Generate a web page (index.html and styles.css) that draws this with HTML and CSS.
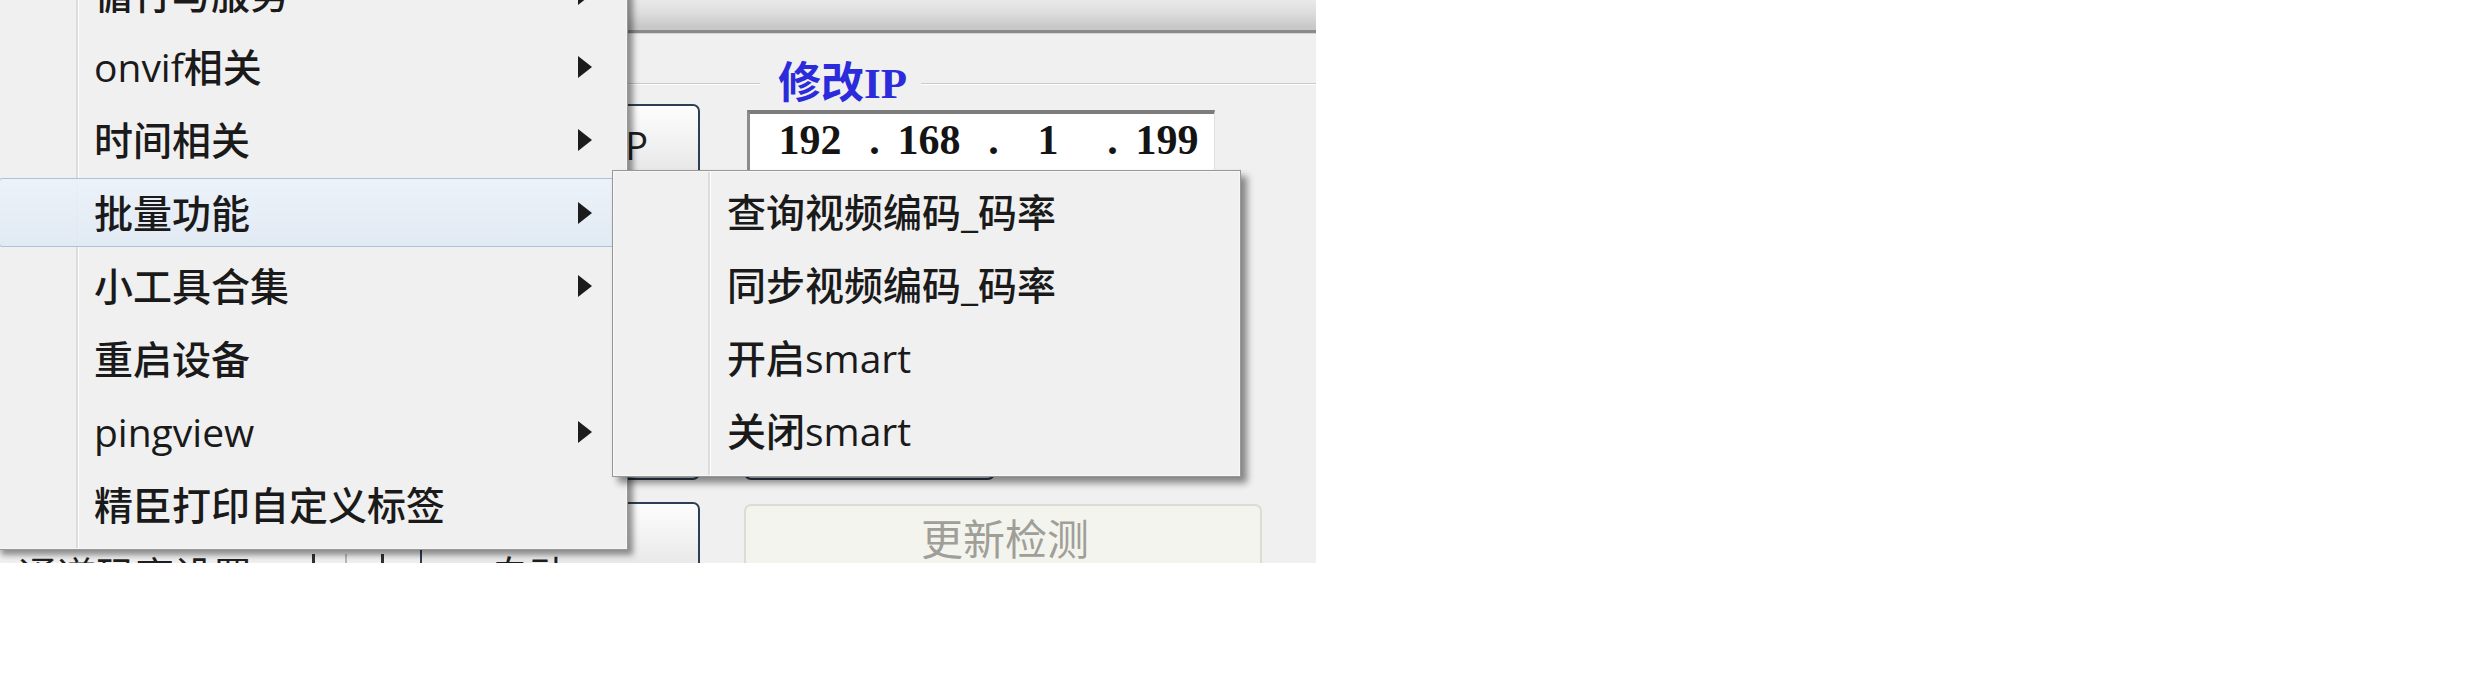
FILE: index.html
```html
<!DOCTYPE html>
<html lang="zh-CN">
<head>
<meta charset="utf-8">
<title>批量功能菜单</title>
<link rel="stylesheet" href="styles.css">
</head>
<body>
<div class="screen">
  <div class="window">
    <div class="titlebar"></div>
    <div class="group-head">
      <span class="gline lead"></span>
      <span class="glabel">修改IP</span>
      <span class="gline rest"></span>
    </div>
    <div class="controls">
      <button class="btn c1 r1"><span class="btn-label">修改IP</span></button>
      <div class="ipbox c2 r1">
        <span class="oct">192</span><span class="dot">.</span><span class="oct">168</span><span class="dot">.</span><span class="oct">1</span><span class="dot">.</span><span class="oct">199</span>
      </div>
      <button class="btn c1 r2">读取参数</button>
      <button class="btn c1 r3">保存参数</button>
      <button class="btn c1 r4">恢复默认</button>
      <button class="btn narrow c2 r4">搜索</button>
      <div class="left-row c0 r5">
        <span class="left-text">通道码率设置</span>
        <span class="spin"></span>
      </div>
      <button class="btn low c1 r5"><span class="low-label">自动</span></button>
      <button class="btn disabled c2 r5">更新检测</button>
    </div>
  </div>

  <div class="menu main-menu">
    <div class="item"><span class="label">循行与服务</span><span class="arrow"></span></div>
    <div class="item"><span class="label">onvif相关</span><span class="arrow"></span></div>
    <div class="item"><span class="label">时间相关</span><span class="arrow"></span></div>
    <div class="item active"><span class="label">批量功能</span><span class="arrow"></span></div>
    <div class="item"><span class="label">小工具合集</span><span class="arrow"></span></div>
    <div class="item"><span class="label">重启设备</span></div>
    <div class="item"><span class="label">pingview</span><span class="arrow"></span></div>
    <div class="item"><span class="label">精臣打印自定义标签</span></div>
  </div>

  <div class="menu sub-menu">
    <div class="item"><span class="label">查询视频编码_码率</span></div>
    <div class="item"><span class="label">同步视频编码_码率</span></div>
    <div class="item"><span class="label">开启smart</span></div>
    <div class="item"><span class="label">关闭smart</span></div>
  </div>
</div>
</body>
</html>
```

FILE: styles.css
```css
* { box-sizing: border-box; }

html, body {
  margin: 0;
  padding: 0;
  background: #ffffff;
}

body {
  font-family: "Open Sans", "Noto Sans CJK SC", sans-serif;
}

.screen {
  position: relative;
  width: 1316px;
  height: 563px;
  overflow: hidden;
  background: #f0f0f0;
}

/* ---------- background window ---------- */
.window {
  width: 1316px;
}

.titlebar {
  height: 33px;
  background: linear-gradient(#e9e9e9, #dedede 40%, #c8c8c8 90%);
  border-bottom: 3px solid #8a8a8a;
  box-shadow: 0 1px 0 #d4d4d4;
}

.group-head {
  display: flex;
  align-items: center;
  height: 40px;
  margin-top: 31px;
}

.gline {
  height: 2px;
  border-top: 1px solid #c9c9c9;
  border-bottom: 1px solid #ffffff;
}

.gline.lead { flex: 0 0 760px; }
.gline.rest { flex: 1 1 auto; }

.glabel {
  margin: 0 14px 0 18px;
  font-family: "Liberation Serif", "Noto Sans CJK SC", serif;
  font-weight: bold;
  font-size: 43px;
  line-height: 40px;
  color: #2b2bdc;
}

.controls {
  display: grid;
  grid-template-columns: 420px 280px 44px 518px;
  grid-template-rows: repeat(5, 79px);
  row-gap: 20px;
  padding-top: 0;
}

.c0 { grid-column: 1; }
.c1 { grid-column: 2; }
.c2 { grid-column: 4; }
.r1 { grid-row: 1; }
.r2 { grid-row: 2; }
.r3 { grid-row: 3; }
.r4 { grid-row: 4; }
.r5 { grid-row: 5; }

.btn {
  margin: 0;
  padding: 0;
  border: 2px solid #2d3f54;
  border-radius: 7px;
  background: linear-gradient(#fdfdfd, #f1f1f1 50%, #e4e4e4);
  font-family: "Open Sans", "Noto Sans CJK SC", sans-serif;
  font-size: 39px;
  color: #1e1e1e;
}

.btn.r1 {
  text-align: right;
  padding-right: 50px;
  font-size: 38px;
}

.btn.narrow {
  width: 251px;
}

.btn.low {
  margin-top: 2px;
  display: flex;
  align-items: flex-start;
  justify-content: flex-start;
  padding: 50px 0 0 68px;
}

.low-label {
  line-height: 40px;
}

.btn.disabled {
  margin-top: 4px;
  border: 2px solid #dcdcd3;
  background: #f4f4ef;
  color: #9f9f97;
  font-size: 42px;
  display: flex;
  align-items: flex-start;
  justify-content: center;
  padding-top: 3px;
  line-height: 60px;
  padding-left: 4px;
}

.ipbox {
  margin: 6px 0 0 3px;
  width: 468px;
  height: 64px;
  background: #ffffff;
  border-top: 4px solid #7c7c7c;
  border-left: 3px solid #8c8c8c;
  border-right: 1px solid #e2e2e2;
  border-bottom: 1px solid #e2e2e2;
  display: flex;
  align-items: flex-start;
  padding-left: 21px;
  padding-top: 2px;
  font-family: "Liberation Serif", serif;
  font-weight: bold;
  font-size: 42px;
  line-height: 48px;
  color: #141414;
}

.oct {
  width: 78px;
  text-align: center;
}

.dot {
  width: 41px;
  text-align: center;
  padding-left: 10px;
}

.left-row {
  display: flex;
  align-items: flex-start;
  padding-top: 50px;
  padding-left: 18px;
}

.left-text {
  font-size: 39px;
  line-height: 50px;
  color: #1e1e1e;
}

.spin {
  margin-left: 60px;
  margin-top: 4px;
  width: 72px;
  height: 60px;
  border-left: 3px solid #303030;
  border-right: 3px solid #303030;
  background: linear-gradient(to right, transparent 30px, #b8b8b8 30px 32px, transparent 32px);
}

/* ---------- popup menus ---------- */
.menu {
  position: absolute;
  display: flex;
  flex-direction: column;
  background-color: #f0f0f0;
  border: 1px solid #979797;
  font-family: "Open Sans", "Noto Sans CJK SC", sans-serif;
  font-size: 39px;
  font-weight: 500;
  color: #1a1a1a;
}

.main-menu {
  left: -4px;
  top: -45px;
  width: 632px;
  padding: 1px 0 8px;
  background-image: linear-gradient(to right, transparent 79px, #dcdcdc 79px, #dcdcdc 81px, #ffffff 81px, #ffffff 82px, transparent 82px);
  box-shadow: inset 0 0 0 1px #f7f7f7, 5px 5px 6px rgba(0, 0, 0, 0.42);
  z-index: 1;
}

.sub-menu {
  left: 612px;
  top: 170px;
  width: 629px;
  height: 307px;
  padding: 4px 0 7px;
  background-image: linear-gradient(to right, transparent 95px, #dcdcdc 95px, #dcdcdc 97px, #ffffff 97px, #ffffff 98px, transparent 98px);
  box-shadow: inset 0 0 0 1px #f7f7f7, 6px 6px 7px rgba(0, 0, 0, 0.45);
  z-index: 2;
}

.item {
  flex: 0 0 auto;
  display: flex;
  align-items: center;
  height: 69px;
  margin: 2px 2px;
  border: 1px solid transparent;
  border-radius: 3px;
}

.main-menu .item { padding-left: 94px; }
.sub-menu .item { padding-left: 111px; }

.item.active {
  background: linear-gradient(rgba(236, 242, 249, 0.92), rgba(224, 233, 244, 0.92));
  border-color: #adc2d9;
}

.label {
  flex: 1 1 auto;
  white-space: nowrap;
  line-height: 50px;
}

.arrow {
  flex: 0 0 auto;
  width: 0;
  height: 0;
  margin-right: 32px;
  border-top: 11px solid transparent;
  border-bottom: 11px solid transparent;
  border-left: 14px solid #1c1c1c;
}
```
